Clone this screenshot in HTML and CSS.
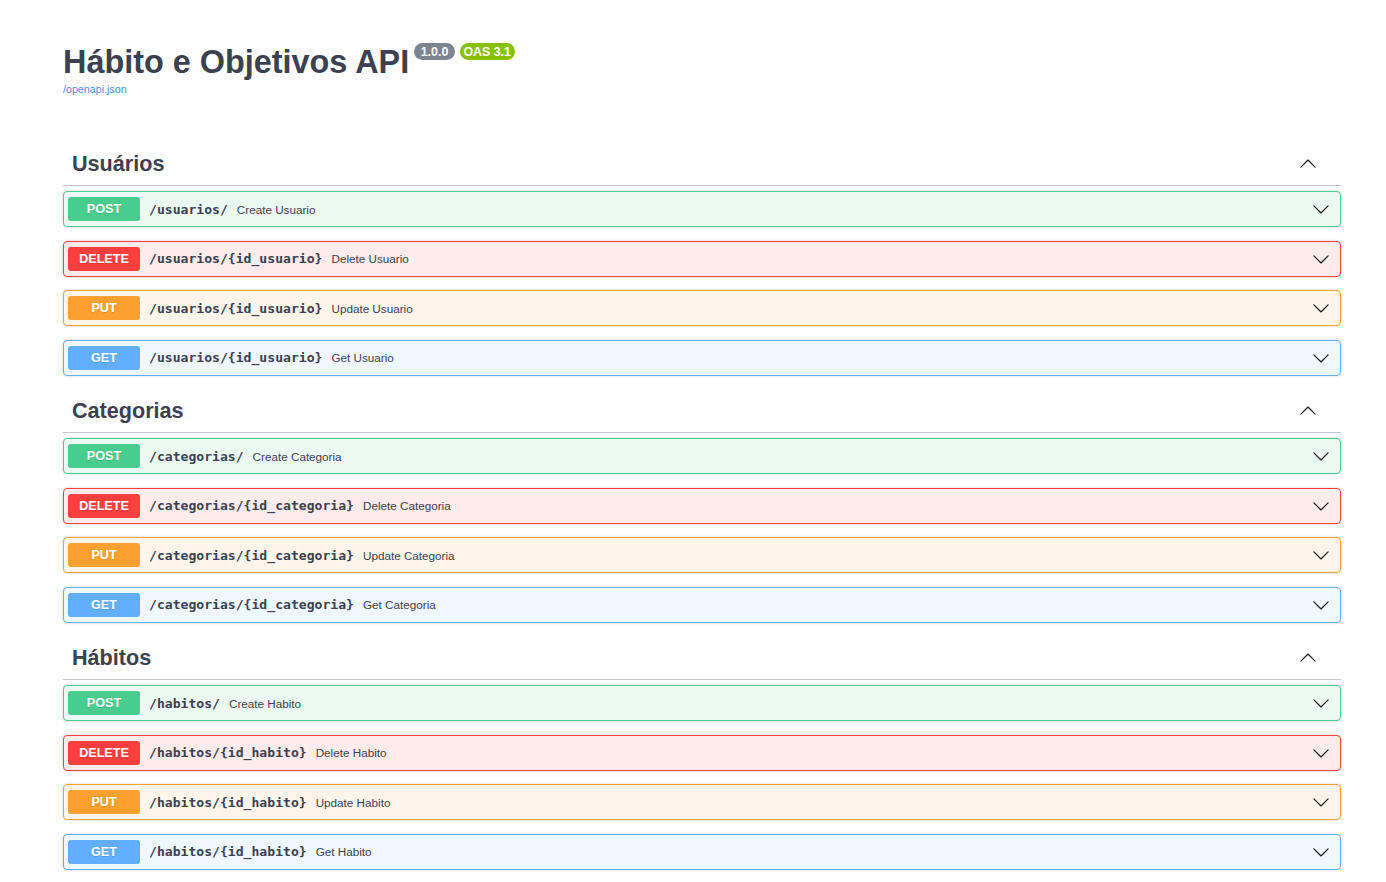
FILE: index.html
```html
<!DOCTYPE html>
<html lang="pt">
<head>
<meta charset="utf-8">
<title>Hábito e Objetivos API</title>
<link rel="stylesheet" href="styles.css">
</head>
<body>
<svg width="0" height="0" class="defs">
  <defs>
    <path id="chev" d="M17.418 6.109c.272-.268.709-.268.979 0s.271.701 0 .969l-7.908 7.83c-.27.268-.707.268-.979 0l-7.908-7.830c-.27-.268-.27-.701 0-.969.271-.268.709-.268.979 0L10 13.25l7.418-7.141z"/>
  </defs>
</svg>
<div class="page">
  <div class="info">
    <h2 class="title">Hábito e Objetivos API<span class="stamp grey"><span class="pre"> 1.0.0 </span></span><span class="stamp green"><span class="pre">OAS 3.1</span></span></h2>
    <a class="link" href="#">/openapi.json</a>
  </div>

  <section class="tag-section">
    <h3 class="tag"><span class="tag-name">Usuários</span><svg class="arrow up" viewBox="0 0 20 20"><use href="#chev"/></svg></h3>
    <div class="op post"><span class="method">POST</span><span class="path">/usuarios/</span><span class="desc">Create Usuario</span><svg class="arrow" viewBox="0 0 20 20"><use href="#chev"/></svg></div>
    <div class="op delete"><span class="method">DELETE</span><span class="path">/usuarios/{id_usuario}</span><span class="desc">Delete Usuario</span><svg class="arrow" viewBox="0 0 20 20"><use href="#chev"/></svg></div>
    <div class="op put"><span class="method">PUT</span><span class="path">/usuarios/{id_usuario}</span><span class="desc">Update Usuario</span><svg class="arrow" viewBox="0 0 20 20"><use href="#chev"/></svg></div>
    <div class="op get"><span class="method">GET</span><span class="path">/usuarios/{id_usuario}</span><span class="desc">Get Usuario</span><svg class="arrow" viewBox="0 0 20 20"><use href="#chev"/></svg></div>
  </section>

  <section class="tag-section">
    <h3 class="tag"><span class="tag-name">Categorias</span><svg class="arrow up" viewBox="0 0 20 20"><use href="#chev"/></svg></h3>
    <div class="op post"><span class="method">POST</span><span class="path">/categorias/</span><span class="desc">Create Categoria</span><svg class="arrow" viewBox="0 0 20 20"><use href="#chev"/></svg></div>
    <div class="op delete"><span class="method">DELETE</span><span class="path">/categorias/{id_categoria}</span><span class="desc">Delete Categoria</span><svg class="arrow" viewBox="0 0 20 20"><use href="#chev"/></svg></div>
    <div class="op put"><span class="method">PUT</span><span class="path">/categorias/{id_categoria}</span><span class="desc">Update Categoria</span><svg class="arrow" viewBox="0 0 20 20"><use href="#chev"/></svg></div>
    <div class="op get"><span class="method">GET</span><span class="path">/categorias/{id_categoria}</span><span class="desc">Get Categoria</span><svg class="arrow" viewBox="0 0 20 20"><use href="#chev"/></svg></div>
  </section>

  <section class="tag-section">
    <h3 class="tag"><span class="tag-name">Hábitos</span><svg class="arrow up" viewBox="0 0 20 20"><use href="#chev"/></svg></h3>
    <div class="op post"><span class="method">POST</span><span class="path">/habitos/</span><span class="desc">Create Habito</span><svg class="arrow" viewBox="0 0 20 20"><use href="#chev"/></svg></div>
    <div class="op delete"><span class="method">DELETE</span><span class="path">/habitos/{id_habito}</span><span class="desc">Delete Habito</span><svg class="arrow" viewBox="0 0 20 20"><use href="#chev"/></svg></div>
    <div class="op put"><span class="method">PUT</span><span class="path">/habitos/{id_habito}</span><span class="desc">Update Habito</span><svg class="arrow" viewBox="0 0 20 20"><use href="#chev"/></svg></div>
    <div class="op get"><span class="method">GET</span><span class="path">/habitos/{id_habito}</span><span class="desc">Get Habito</span><svg class="arrow" viewBox="0 0 20 20"><use href="#chev"/></svg></div>
  </section>
</div>
</body>
</html>
```

FILE: styles.css
```css
html, body {
  margin: 0;
  padding: 0;
  background: #fff;
}
body {
  font-family: "Liberation Sans", Arial, sans-serif;
  color: #3b4151;
}
.defs {
  position: absolute;
  width: 0;
  height: 0;
}
.page {
  padding: 44px 45px 0 63px;
}
.info {
  margin-bottom: 47px;
}
.title {
  margin: 0 0 2px 0;
  font-size: 32.4px;
  line-height: 37px;
  font-weight: 700;
  color: #3b4151;
}
.stamp {
  display: inline-block;
  position: relative;
  top: -5px;
  vertical-align: super;
  margin-left: 4.5px;
  padding: 1px 3.6px 0;
  border-radius: 57px;
  font-size: 12.4px;
  line-height: 16px;
  font-weight: 700;
  color: #fff;
}
.stamp .pre {
  white-space: pre;
}
.stamp.grey {
  background: #7d8492;
}
.stamp.green {
  background: #89bf04;
}
.link {
  display: block;
  font-size: 10.7px;
  line-height: 12px;
  color: #4990e2;
  text-decoration: none;
}
.tag-section {
  display: flex;
  flex-direction: column;
}
.tag {
  display: flex;
  align-items: center;
  margin: 0 0 5px 0;
  padding: 10px 18px 9px 9px;
  border-bottom: 1px solid rgba(59, 65, 81, 0.3);
  font-size: 21.6px;
  line-height: 24px;
  font-weight: 700;
  color: #3b4151;
}
.tag-name {
  flex: 1;
}
.arrow {
  width: 18px;
  height: 18px;
  flex: none;
  fill: #222;
  margin-right: 6px;
}
.arrow.up {
  transform: rotate(180deg);
}
.op {
  display: flex;
  align-items: center;
  margin: 0 0 13.5px 0;
  padding: 5px 4px;
  border: 1px solid;
  border-radius: 4px;
  box-shadow: 0 0 3px rgba(0, 0, 0, 0.19);
}
.method {
  flex: none;
  width: 72px;
  height: 24px;
  line-height: 24px;
  border-radius: 3px;
  text-align: center;
  font-size: 12.6px;
  font-weight: 700;
  color: #fff;
  text-shadow: 0 1px 0 rgba(0, 0, 0, 0.1);
}
.path {
  padding: 0 9px;
  font-family: "DejaVu Sans Mono", "Liberation Mono", monospace;
  font-size: 13.1px;
  font-weight: 700;
  color: #3b4151;
}
.desc {
  flex: 1;
  font-size: 11.7px;
  color: #3b4151;
}
.op.post {
  background: rgba(73, 204, 144, 0.1);
  border-color: #49cc90;
}
.op.post .method {
  background: #49cc90;
}
.op.delete {
  background: rgba(249, 62, 62, 0.1);
  border-color: #f93e3e;
}
.op.delete .method {
  background: #f93e3e;
}
.op.put {
  background: rgba(252, 161, 48, 0.1);
  border-color: #fca130;
}
.op.put .method {
  background: #fca130;
}
.op.get {
  background: rgba(97, 175, 254, 0.1);
  border-color: #61affe;
}
.op.get .method {
  background: #61affe;
}
```
